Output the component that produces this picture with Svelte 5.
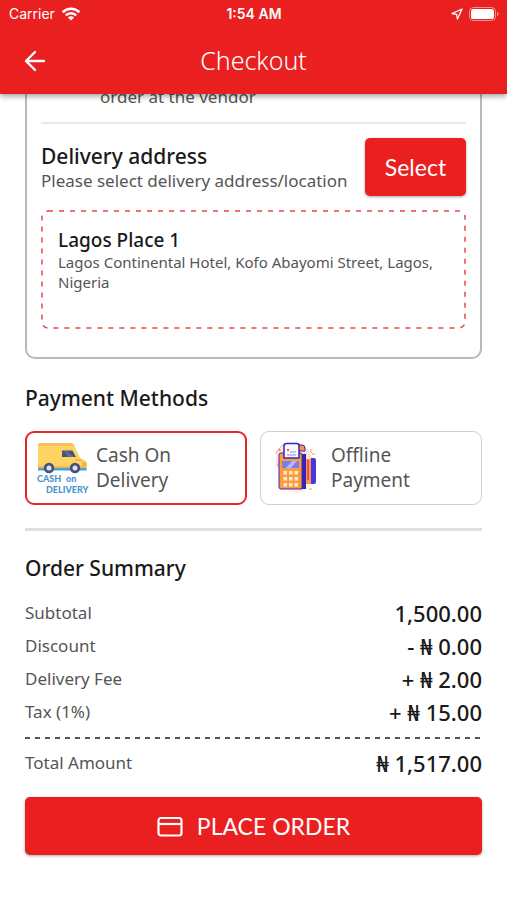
<script>
  let method = $state('cash');

  const lines = [
    { label: 'Subtotal', value: '1,500.00' },
    { label: 'Discount', value: '- ₦ 0.00' },
    { label: 'Delivery Fee', value: '+ ₦ 2.00' },
    { label: 'Tax (1%)', value: '+ ₦ 15.00' }
  ];
  const total = '₦ 1,517.00';
</script>

<div class="screen">
  <header>
    <div class="status">
      <div class="carrier">
        <span>Carrier</span>
        <svg width="20" height="14" viewBox="0 0 20 14" fill="none" stroke="#fff" stroke-width="2.6" aria-hidden="true">
          <path d="M1.6 5.2a12 12 0 0 1 16.8 0M4.8 8.4a7.4 7.4 0 0 1 10.4 0" />
          <path d="M10 13.6 6.9 10.5a4.4 4.4 0 0 1 6.2 0Z" fill="#fff" stroke="none" />
        </svg>
      </div>
      <time>1:54 AM</time>
      <div class="power">
        <svg width="12" height="12" viewBox="0 0 12 12" fill="none" stroke="#fff" stroke-width="1.3" stroke-linejoin="round" aria-hidden="true">
          <path d="M11 1 1 5.6l4.6.8L6.4 11Z" />
        </svg>
        <svg width="30" height="14" viewBox="0 0 30 14" aria-hidden="true">
          <rect x=".5" y=".5" width="26" height="13" rx="4" fill="none" stroke="#fff" stroke-opacity=".5" />
          <rect x="2" y="2" width="23" height="10" rx="2.6" fill="#fff" />
          <path d="M28 4.8q1.6.6 1.6 2.2T28 9.2Z" fill="#fff" fill-opacity=".5" />
        </svg>
      </div>
    </div>
    <div class="bar">
      <button class="back" aria-label="Back">
        <svg width="22" height="22" viewBox="0 0 22 22" fill="none" stroke="#fff" stroke-width="2.4" stroke-linecap="round" stroke-linejoin="round" aria-hidden="true">
          <path d="M20 11H2M11 2 2 11l9 9" />
        </svg>
      </button>
      <h1>Checkout</h1>
    </div>
  </header>

  <main>
    <section class="card">
      <p class="pickup">order at the vendor</p>
      <div class="address-head">
        <div>
          <h2>Delivery address</h2>
          <p class="hint">Please select delivery address/location</p>
        </div>
        <button class="primary select">Select</button>
      </div>
      <div class="address">
        <svg class="outline" aria-hidden="true">
          <rect x="1" y="1" rx="6" />
        </svg>
        <h3>Lagos Place 1</h3>
        <p>Lagos Continental Hotel, Kofo Abayomi Street, Lagos, Nigeria</p>
      </div>
    </section>

    <h2 class="title">Payment Methods</h2>
    <div class="methods">
      <label class:chosen={method === 'cash'}>
        <input type="radio" name="method" value="cash" bind:group={method} />
        <svg width="52" height="52" viewBox="0 0 52 52" aria-hidden="true">
          <path d="M1 3.5Q1 1 3.5 1H33q3 0 4 2l6 13 5 2.500q1.500 1 1.500 3V28H1Z" fill="#fdd462" />
          <path d="M2 1h31q3 0 4.500 3H1.500Z" fill="#f6bd5b" />
          <path d="M43 17h-5v2h8zM45 20h4.500v4H45z" fill="#f0b34f" />
          <path d="M1 24h48.500v2.500H1z" fill="#f5b65a" />
          <path d="M1 26h48.500v2.500H1z" fill="#4f9fd5" />
          <path d="M25 8.500h10.500L39 15H25Z" fill="#435482" />
          <path d="m29 9 8 6h-5L27 9Z" fill="#61719b" />
          <circle cx="12" cy="26" r="5.200" fill="#44507e" /><circle cx="12" cy="26" r="2.500" fill="#dce5ef" />
          <circle cx="38" cy="26" r="5.200" fill="#44507e" /><circle cx="38" cy="26" r="2.500" fill="#dce5ef" />
          <g fill="#4795d0" font-family="Lato, sans-serif" font-weight="900">
            <text x="0" y="40" font-size="9">CASH</text>
            <text x="29" y="40" font-size="9">on</text>
            <text x="9" y="51" font-size="9">DELIVERY</text>
          </g>
        </svg>
        <span>Cash On Delivery</span>
      </label>
      <label class:chosen={method === 'offline'}>
        <input type="radio" name="method" value="offline" bind:group={method} />
        <svg width="52" height="52" viewBox="0 0 52 52" aria-hidden="true">
          <circle cx="22" cy="19" r="18" fill="#fce0e2" />
          <circle cx="25" cy="38" r="13" fill="#fff0df" />
          <path d="M4 12q3-8 10-10M5 24l2-3M38 9l2 2" stroke="#f18b91" fill="none" />
          <path d="M33 17h8v25h-8z" fill="#ff944f" />
          <path d="M39 16h3q2 0 2 2v22q0 2-2 2h-3z" fill="#4637db" />
          <path d="M35 18h2v20h-2z" fill="#ef4e6b" />
          <path d="M26 3h4q3 0 3 3v3h-7z" fill="#ff944f" stroke="#3029b4" />
          <path d="M8 12h26v35H11q-3 0-3-3Z" fill="#3026b2" />
          <path d="M7 13q0-2 2-2h19q2 0 2 2v34H9q-2 0-2-2Z" fill="#ff9b3d" stroke="#3b2bb7" />
          <path d="M12 16V4q0-2.500 2.500-2.500H25q2 0 2 2.500v12Z" fill="#f8f8ff" stroke="#3427bd" stroke-width="1.500" />
          <path d="M18 10h6M15 13h9" stroke="#8f91e8" />
          <path d="M15 8h2" stroke="#fa456d" stroke-width="2" />
          <path d="M10 19h17v7H10z" fill="#7780e8" />
          <path d="m14 26 6-7h5l-6 7Z" fill="#b4b9ff" />
          <path d="M11.500 29h3.500v3.500h-3.500zM17 29h3.500v3.500H17zM22.500 29H26v3.500h-3.500zM11.500 35h3.500v3.500h-3.500zM17 35h3.500v3.500H17zM22.500 35H26v3.500h-3.500zM11.500 41h3.500v3.500h-3.500zM17 41h3.500v3.500H17zM22.500 41H26v3.500h-3.500z" fill="#ffedcf" />
          <path d="M6 8h3M7.500 6.500v3M38 8h2M37 47h3M40 12h3" stroke="#f9a33a" />
        </svg>
        <span>Offline Payment</span>
      </label>
    </div>

    <section class="summary">
      <h2>Order Summary</h2>
      <dl>
        {#each lines as line}
          <div><dt>{line.label}</dt><dd>{line.value}</dd></div>
        {/each}
        <div class="total"><dt>Total Amount</dt><dd>{total}</dd></div>
      </dl>
    </section>

    <button class="primary order">
      <svg width="26" height="22" viewBox="0 0 26 22" fill="none" stroke="#fff" stroke-width="2.200" aria-hidden="true">
        <rect x="1.500" y="3" width="23" height="17.500" rx="2.500" />
        <path d="M1.500 9h23" />
      </svg>
      PLACE ORDER
    </button>
  </main>
</div>

<style>
  :global(body) {
    background: #fff;
  }
  .screen {
    min-height: 100vh;
    font-family: 'Noto Sans', 'Open Sans', sans-serif;
    font-weight: 400;
    color: #555;
  }
  .screen * {
    box-sizing: border-box;
  }
  h1, h2, h3, p, dl, dd {
    margin: 0;
  }
  button {
    border: 0;
    padding: 0;
    font: inherit;
    color: #fff;
    cursor: pointer;
  }
  header {
    position: sticky;
    top: 0;
    z-index: 2;
    background: #ea1f1f;
    color: #fff;
    box-shadow: 0 2px 6px rgba(0, 0, 0, 0.4);
  }
  .status {
    display: grid;
    grid-template-columns: 1fr auto 1fr;
    align-items: center;
    height: 27px;
    padding: 0 8px 0 9px;
    font-family: Inter, sans-serif;
    font-size: 14px;
    font-weight: 400;
  }
  .carrier, .power {
    display: flex;
    align-items: center;
    gap: 6px;
  }
  .power {
    justify-content: flex-end;
  }
  time {
    font-weight: 600;
  }
  .bar {
    display: grid;
    grid-template-columns: 22px 1fr 22px;
    align-items: center;
    height: 67px;
    padding: 0 24px;
  }
  .back {
    display: flex;
    background: none;
  }
  h1 {
    font-size: 25px;
    font-weight: 300;
    line-height: 34px;
    padding-bottom: 2px;
    text-align: center;
  }
  main {
    padding: 0 25px 45px;
  }
  h2, h3 {
    font-weight: 500;
    color: #1a1a1a;
  }
  h2 {
    font-size: 21px;
    line-height: 28px;
  }
  .card {
    margin-top: -9px;
    padding: 0 14px 28px;
    border: 2px solid #b9b9b9;
    border-top: 0;
    border-radius: 0 0 10px 10px;
  }
  .pickup {
    padding: 0 0 13px 59px;
    border-bottom: 2px solid #eaeaea;
    font-size: 17px;
    line-height: 24px;
  }
  .address-head {
    display: flex;
    align-items: center;
    justify-content: space-between;
    gap: 12px;
    padding: 14px 0;
  }
  .hint {
    font-size: 17px;
    line-height: 22px;
  }
  .primary {
    background: #ea1f1f;
    border-radius: 5px;
    box-shadow: 0 1px 3px rgba(0, 0, 0, 0.35);
    font-family: Lato, sans-serif;
    font-weight: 400;
    font-size: 23px;
  }
  .select {
    flex: none;
    width: 101px;
    height: 58px;
  }
  .address {
    position: relative;
    min-height: 119px;
    padding: 18px 17px;
  }
  .outline {
    position: absolute;
    inset: 0;
    width: 100%;
    height: 100%;
  }
  .outline rect {
    width: calc(100% - 2px);
    height: calc(100% - 2px);
    fill: none;
    stroke: #e8474b;
    stroke-width: 1.5;
    stroke-dasharray: 5 6;
  }
  h3 {
    font-size: 19px;
    line-height: 24px;
  }
  .address p {
    font-size: 15px;
    line-height: 20px;
  }
  .title {
    margin: 25px 0 19px;
  }
  .methods {
    display: grid;
    grid-template-columns: 1fr 1fr;
    gap: 13px;
    padding-bottom: 23px;
    border-bottom: 3px solid #e0e0e0;
  }
  label {
    position: relative;
    display: flex;
    align-items: center;
    gap: 7px;
    height: 74px;
    padding: 0 50px 0 11px;
    border: 1px solid #cfcfcf;
    border-radius: 9px;
    font-size: 19px;
    line-height: 25px;
    cursor: pointer;
  }
  label.chosen {
    padding-left: 10px;
    border: 2px solid #e3262b;
  }
  label svg {
    flex: none;
  }
  label input {
    position: absolute;
    opacity: 0;
  }
  .summary {
    padding: 23px 0 9px;
  }
  dl {
    margin-top: 14px;
  }
  dl div {
    display: flex;
    align-items: center;
    justify-content: space-between;
    height: 33px;
  }
  dt {
    font-size: 17px;
  }
  dd {
    font-size: 22px;
    font-weight: 500;
    color: #1a1a1a;
  }
  dl .total {
    height: 51px;
    margin-top: 9px;
    background: repeating-linear-gradient(90deg, #555 0 5px, transparent 5px 10px) top / 100% 2px no-repeat;
  }
  .order {
    display: flex;
    align-items: center;
    justify-content: center;
    gap: 14px;
    width: 100%;
    height: 58px;
  }
</style>
